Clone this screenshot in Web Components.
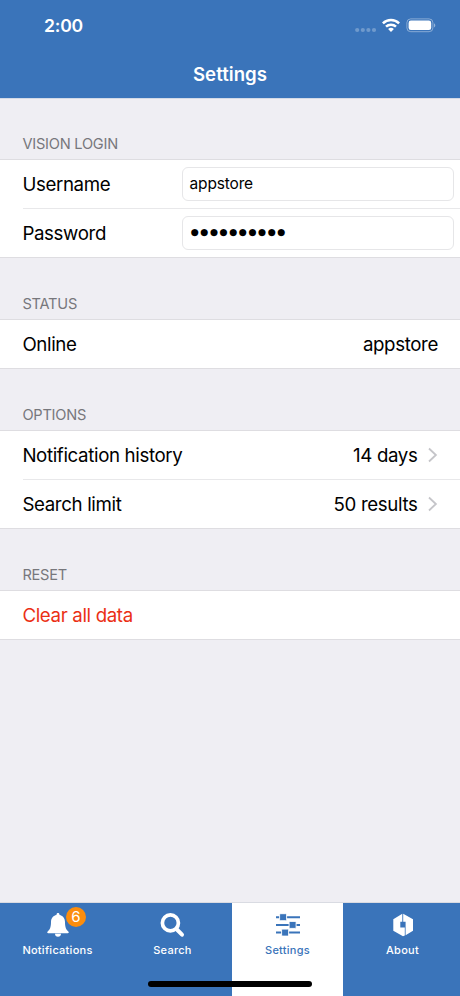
<!DOCTYPE html>
<html lang="en">
<head>
<meta charset="utf-8">
<title>Settings</title>
<style>
html,body{margin:0;height:100%}
body{font-family:Inter,"Liberation Sans",sans-serif;background:#efeef3;overflow:hidden}
</style>
</head>
<body>
<settings-app></settings-app>
<script>
const define = (name, html) => customElements.define(name, class extends HTMLElement {
  constructor() {
    super();
    this.attachShadow({ mode: "open" }).innerHTML = html;
  }
});

define("status-bar", `
<style>
:host{display:flex;justify-content:space-between;align-items:flex-start;height:50px;padding:0 24px 0 44px;box-sizing:border-box;color:#fff}
.time{font-size:17.6px;font-weight:560;line-height:22px;letter-spacing:-.2px;margin-top:15px}
svg{display:block;margin-top:16px}
</style>
<span class="time">2:00</span>
<svg width="82" height="18" viewBox="354 16 82 18" fill="#fff">
  <g opacity=".27"><circle cx="357.2" cy="30" r="2.1"/><circle cx="362.8" cy="30" r="2.1"/><circle cx="368.4" cy="30" r="2.1"/><circle cx="374" cy="30" r="2.1"/></g>
  <g fill="none" stroke="#fff" stroke-width="2.5"><path d="M382.9 23.3a11.6 11.6 0 0 1 16.2 0"/><path d="M386 26.7a7.2 7.2 0 0 1 10 0"/></g>
  <path d="M388.1 29.1a4.2 4.2 0 0 1 5.8 0L391 32z"/>
  <rect x="406.9" y="18.9" width="26" height="12.8" rx="3.8" fill="none" stroke="#fff" stroke-opacity=".4"/>
  <rect x="408.6" y="20.6" width="22.6" height="9.4" rx="2.3"/>
  <path d="M434 23.2c1.8.8 1.8 3.4 0 4.2z" opacity=".45"/>
</svg>`);

define("nav-header", `
<style>
:host{display:block;height:98px;background:#3a74ba;color:#fff}
h1{margin:0;padding-top:11px;font-size:18.6px;font-weight:560;line-height:26px;text-align:center;letter-spacing:.05px}
</style>
<status-bar></status-bar><h1><slot></slot></h1>`);

define("settings-group", `
<style>
:host{display:block}
header{height:61px;box-sizing:border-box;padding:37px 0 0 22.4px;font-size:14.6px;line-height:18px;letter-spacing:-.23px;color:#77777c}
.rows{display:flex;flex-direction:column;gap:1px;background:linear-gradient(#e8e8ea,#e8e8ea) 23px 48px/100% 1px no-repeat #fff;border-top:1px solid #dedde1;border-bottom:1px solid #dedde1}
:host([single]) .rows{background:#fff}
</style>
<header><slot name="title"></slot></header><div class="rows"><slot></slot></div>`);

define("settings-row", `
<style>
:host{display:flex;align-items:center;justify-content:space-between;height:48px;padding:0 22px 0 22.4px;font-size:18.7px;line-height:24px;color:#000;letter-spacing:-.36px;white-space:nowrap;box-sizing:border-box}
:host([danger]){color:#eb3015}
:host([field]){padding-right:6px}
.start,.end{display:flex;align-items:center;padding-top:2px}
:host([field]) .end{padding-top:0}
svg{display:none;margin:-2px 0 0 10.5px}
:host([link]) svg{display:block}
</style>
<span class="start"><slot></slot></span>
<span class="end"><slot name="value"></slot><svg width="10" height="16" viewBox="0 0 10 16" fill="none" stroke="#c5c5c9" stroke-width="1.8"><path d="M1 1.500 7.900 8 1 14.500"/></svg></span>`);

define("text-field", `
<style>
:host{display:flex;align-items:center;box-sizing:border-box;width:272.5px;height:34px;border:1px solid #e6e6e8;border-radius:6px;padding-left:7px;background:#fff;font-size:15.5px;letter-spacing:-.15px;line-height:20px}
:host([secret]){font-family:"DejaVu Sans",sans-serif;font-size:9.3px;letter-spacing:1.5px;padding:0 0 2px 8px}
</style>
<slot></slot>`);

define("tab-item", `
<style>
:host{display:flex;flex-direction:column;align-items:center;flex:1;box-sizing:border-box;padding-top:8px;color:#fff}
:host([active]){background:linear-gradient(#fff,#fff) 2px 0/111px 100% no-repeat;color:#3a74ba}
.icon{position:relative;width:28px;height:28px}
.label{font-size:11px;font-weight:500;line-height:14px;letter-spacing:.26px;margin-top:4px}
::slotted(svg){display:block;width:28px;height:28px}
::slotted(b){position:absolute;left:22.500px;top:-4px;width:20px;height:20px;border-radius:50%;background:#fc8d0d;color:#fff;font-size:15px;font-weight:400;line-height:20px;text-align:center}
</style>
<div class="icon"><slot name="icon"></slot><slot name="badge"></slot></div>
<span class="label"><slot></slot></span>`);

define("tab-bar", `
<style>
:host{display:flex;position:relative;height:93px;background:#3a74ba;box-shadow:0 -1px #d9dbe2}
.home{position:absolute;left:148px;top:78px;width:164px;height:5.500px;border-radius:3px;background:#000}
</style>
<slot></slot><div class="home"></div>`);

define("settings-app", `
<style>
:host{display:flex;flex-direction:column;width:460px;height:996px;background:#efeef3}
main{flex:1}
nav-header{box-shadow:0 1px #d3dae7}
</style>
<nav-header>Settings</nav-header>
<main>
  <settings-group><span slot="title">VISION LOGIN</span>
    <settings-row field>Username<text-field slot="value">appstore</text-field></settings-row>
    <settings-row field>Password<text-field slot="value" secret>●●●●●●●●●●</text-field></settings-row>
  </settings-group>
  <settings-group single><span slot="title">STATUS</span>
    <settings-row>Online<span slot="value">appstore</span></settings-row>
  </settings-group>
  <settings-group><span slot="title">OPTIONS</span>
    <settings-row link>Notification history<span slot="value">14 days</span></settings-row>
    <settings-row link>Search limit<span slot="value">50 results</span></settings-row>
  </settings-group>
  <settings-group single><span slot="title">RESET</span>
    <settings-row danger>Clear all data</settings-row>
  </settings-group>
</main>
<tab-bar>
  <tab-item><svg slot="icon" viewBox="44.200 911 28 28" fill="#fff"><path d="M58.200 913c.9 0 1.500.6 1.500 1.500v.5c3.600.7 5.500 3.500 5.500 7.100 0 5.600 1.300 7.700 3.300 9.300.8.700.5 1.800-.6 1.800H48.500c-1.100 0-1.400-1.100-.6-1.800 2-1.600 3.300-3.700 3.300-9.300 0-3.600 1.900-6.400 5.500-7.100v-.5c0-.9.6-1.500 1.500-1.500zM55.200 933.700h6c0 1.800-1.200 3.100-3 3.100s-3-1.300-3-3.100z"/></svg><b slot="badge">6</b>Notifications</tab-item>
  <tab-item><svg slot="icon" viewBox="159.200 911 28 28" fill="none" stroke="#fff"><circle cx="170.600" cy="922.900" r="8" stroke-width="3.700"/><path d="m176.600 929 5.600 5.700" stroke-width="4" stroke-linecap="round"/></svg>Search</tab-item>
  <tab-item active><svg slot="icon" viewBox="274 911 28 28" fill="#3a74ba"><path d="M276 916.200h24v2h-24zM276 923.900h24v2h-24zM276 931.600h24v2h-24z"/><g stroke="#fff" stroke-width=".9"><rect x="279.600" y="913.700" width="7" height="7" rx="1"/><rect x="289.100" y="921.400" width="7" height="7" rx="1"/><rect x="281.600" y="929.100" width="7" height="7" rx="1"/></g></svg>Settings</tab-item>
  <tab-item><svg slot="icon" viewBox="389 911 28 28" fill="#fff"><path d="M402.300 913.700v8.100h-2v5.700h4.500v8.100l-1.800.6-9.700-5.500v-11.500zM403.200 913.700l9.800 5.500v11.500l-7.400 4.500v-13.400h-2.400z"/></svg>About</tab-item>
</tab-bar>`);
</script>
</body>
</html>
